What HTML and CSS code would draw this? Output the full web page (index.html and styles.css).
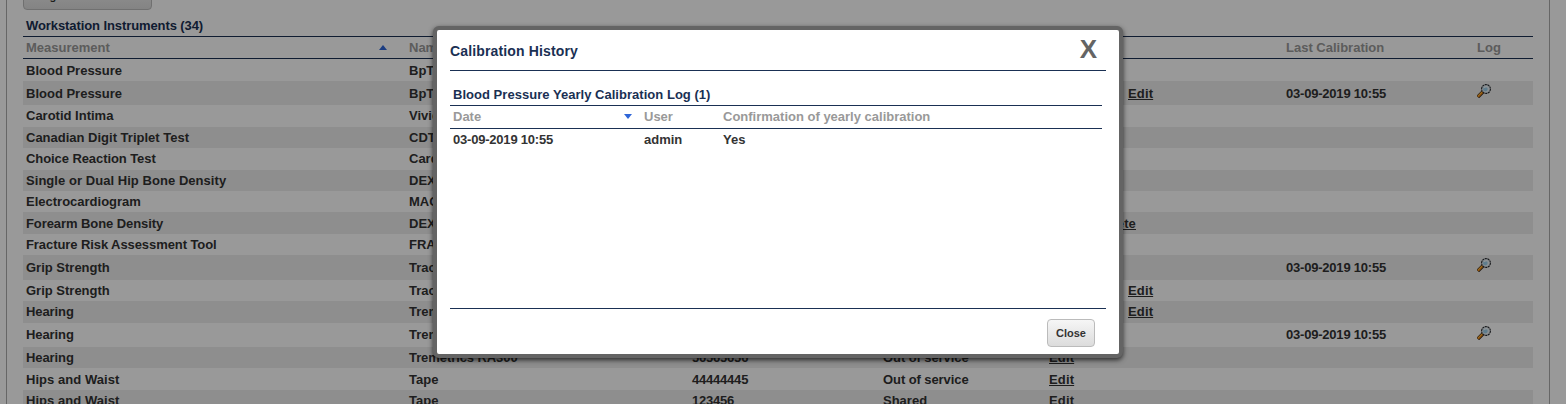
FILE: index.html
```html
<!DOCTYPE html>
<html lang="en">
<head>
<meta charset="utf-8">
<title>Workstation Instruments</title>
<link rel="stylesheet" href="styles.css">
</head>
<body>
<svg class="defs" width="0" height="0">
  <symbol id="magnifier" viewBox="0 0 14 14">
    <path d="M0.8 13 L5.8 8" stroke="#33261c" stroke-width="3.6"/>
    <path d="M0.9 12.7 L5.6 8" stroke="#f08c14" stroke-width="2.2"/>
    <path d="M1 11.9 L4.8 8.1" stroke="#ffc34d" stroke-width=".8"/>
    <circle cx="9" cy="5" r="4.4" fill="#e8f0f5" stroke="#23262b" stroke-width="1.1" stroke-dasharray="2.2 .5"/>
    <circle cx="8.3" cy="5" r="2.4" fill="#9fd0ec"/>
    <path d="M6 4.6 Q7 2.2 9.4 2.2 L11.4 3.4 Q8.6 3 6 4.6Z" fill="#fff"/>
  </symbol>
</svg>
<main class="panel">
  <div class="toolbar"><button class="btn register">Register Instrument</button></div>
  <h2 class="list-title">Workstation Instruments (34)</h2>
  <div class="row head"><span>Measurement<i class="sort-up"></i></span><span>Name</span><span></span><span></span><span></span><span>Last Calibration</span><span>Log</span></div>
  <div class="row first"><span>Blood Pressure</span><span>BpTru</span></div>
  <div class="row alt tall"><span>Blood Pressure</span><span>BpTru</span><span></span><span></span><span class="wide"><a>Edit</a></span><span class="num">03-09-2019 10:55</span><span><svg class="icon"><use href="#magnifier"/></svg></span></div>
  <div class="row h22"><span>Carotid Intima</span><span>Vivid</span></div>
  <div class="row alt"><span>Canadian Digit Triplet Test</span><span>CDTT</span></div>
  <div class="row h22"><span class="snug">Choice Reaction Test</span><span>Cardinal</span></div>
  <div class="row alt"><span class="loose">Single or Dual Hip Bone Density</span><span>DEXA</span></div>
  <div class="row"><span>Electrocardiogram</span><span>MAC</span></div>
  <div class="row alt h22 low"><span class="snug">Forearm Bone Density</span><span>DEXA</span><span></span><span></span><span class="mid"><a>Delete</a></span></div>
  <div class="row"><span class="snug">Fracture Risk Assessment Tool</span><span>FRAX</span></div>
  <div class="row alt tall h25"><span>Grip Strength</span><span>Tracker</span><span></span><span></span><span></span><span class="num">03-09-2019 10:55</span><span><svg class="icon"><use href="#magnifier"/></svg></span></div>
  <div class="row"><span>Grip Strength</span><span>Tracker</span><span></span><span></span><span class="wide"><a>Edit</a></span></div>
  <div class="row alt h22"><span class="snug">Hearing</span><span>Tremetrics</span><span></span><span></span><span class="wide"><a>Edit</a></span></div>
  <div class="row h24 low"><span class="snug">Hearing</span><span>Tremetrics</span><span></span><span></span><span></span><span class="num">03-09-2019 10:55</span><span><svg class="icon icon-low"><use href="#magnifier"/></svg></span></div>
  <div class="row alt"><span class="snug">Hearing</span><span class="snug">Tremetrics RA300</span><span class="num">56565656</span><span class="snug">Out of service</span><span><a>Edit</a></span></div>
  <div class="row h22 low"><span class="loose">Hips and Waist</span><span>Tape</span><span class="num">44444445</span><span class="snug">Out of service</span><span><a>Edit</a></span></div>
  <div class="row alt"><span class="loose">Hips and Waist</span><span>Tape</span><span class="num">123456</span><span>Shared</span><span><a>Edit</a></span></div>
</main>
<div class="overlay"></div>
<section class="dialog">
  <header class="dialog-head"><h1>Calibration History</h1><b class="x">X</b></header>
  <div class="dialog-body">
    <h2 class="log-title">Blood Pressure Yearly Calibration Log (1)</h2>
    <div class="log-row log-head"><span>Date<i class="sort-down"></i></span><span>User</span><span>Confirmation of yearly calibration</span></div>
    <div class="log-row"><span class="num">03-09-2019 10:55</span><span>admin</span><span>Yes</span></div>
  </div>
  <footer class="dialog-foot"><button class="btn close">Close</button></footer>
</section>
</body>
</html>
```
FILE: styles.css
```css
* { box-sizing: border-box; }
body {
  margin: 0;
  height: 404px;
  overflow: hidden;
  background: #fff;
  color: #333;
  font: bold 13px/15px "Liberation Sans", Arial, sans-serif;
}
h1, h2 { margin: 0; font-size: 13px; line-height: 15px; color: #1a3053; }
.defs { position: absolute; }
.panel {
  height: 404px;
  margin: 0 16px 0 6px;
  border: solid #aaa;
  border-width: 0 1px;
  padding: 0 16px;
  overflow: hidden;
}
.toolbar { height: 10px; display: flex; align-items: flex-end; }
.btn {
  border: 1px solid #bbb;
  border-radius: 4px;
  background: linear-gradient(#f6f6f6, #dcdcdc);
  color: #333;
  font: bold 11px/13px "Liberation Sans", Arial, sans-serif;
  padding: 0;
}
.register { width: 129px; height: 28px; flex: none; }
.list-title { height: 27px; padding: 8px 3px 0; border-bottom: 1px solid #1a3053; letter-spacing: -.09px; }
.row {
  display: grid;
  grid-template-columns: 383px 283px 191px 166px 237px 191px 1fr;
  height: 21px;
  padding: 3px 0 0 3px;
  white-space: nowrap;
}
.row > span { height: 15px; }
.alt { background: #ededed; }
.head { height: 22px; color: #999; border-bottom: 1px solid #1a3053; }
.first { height: 22px; padding-top: 4px; }
.tall { height: 24px; padding-top: 5px; }
.h22 { height: 22px; }
.h24 { height: 24px; }
.h25 { height: 25px; }
.low { padding-top: 4px; }
.num { letter-spacing: -.21px; }
.snug { letter-spacing: -.08px; }
.loose { letter-spacing: .05px; }
.wide { padding-left: 79px; }
.mid { width: 87px; text-align: right; }
a { text-decoration: underline; letter-spacing: .15px; }
.icon { display: block; width: 14px; height: 14px; margin-top: -2px; }
.icon-low { margin-top: -1px; }
.sort-up, .sort-down { float: right; width: 8px; height: 5px; background: #2f66d8; }
.sort-up { margin: 5px 22px 0 0; clip-path: polygon(50% 0, 100% 100%, 0 100%); }
.sort-down { margin: 5px 12px 0 0; clip-path: polygon(0 0, 100% 0, 50% 100%); }
.overlay { position: absolute; inset: 0; background: rgba(0, 0, 0, .4); }
.dialog {
  position: absolute;
  left: 433px;
  top: 26px;
  width: 690px;
  height: 332px;
  border: 4px solid #646464;
  border-radius: 6px;
  padding: 0 13px;
  background: #fff;
  box-shadow: 0 2px 5px rgba(0, 0, 0, .7);
}
.dialog-head {
  height: 41px;
  display: flex;
  justify-content: space-between;
  padding: 13px 9px 0 0;
  border-bottom: 1px solid #1a3053;
}
.dialog-head h1 { font-size: 14px; line-height: 16px; letter-spacing: .14px; }
.x { font-size: 26px; line-height: 30px; margin-top: -9px; color: #646464; }
.dialog-body { height: 237px; padding: 16px 4px 0 0; }
.log-title { height: 19px; padding-left: 3px; border-bottom: 1px solid #1a3053; letter-spacing: .03px; }
.log-row { display: grid; grid-template-columns: 191px 79px 1fr; padding: 3px 0 0 3px; height: 23px; }
.log-head { color: #999; border-bottom: 1px solid #1a3053; }
.dialog-foot {
  display: flex;
  justify-content: flex-end;
  padding: 10px 11px 0 0;
  border-top: 1px solid #1a3053;
}
.close { width: 48px; height: 28px; }
```
